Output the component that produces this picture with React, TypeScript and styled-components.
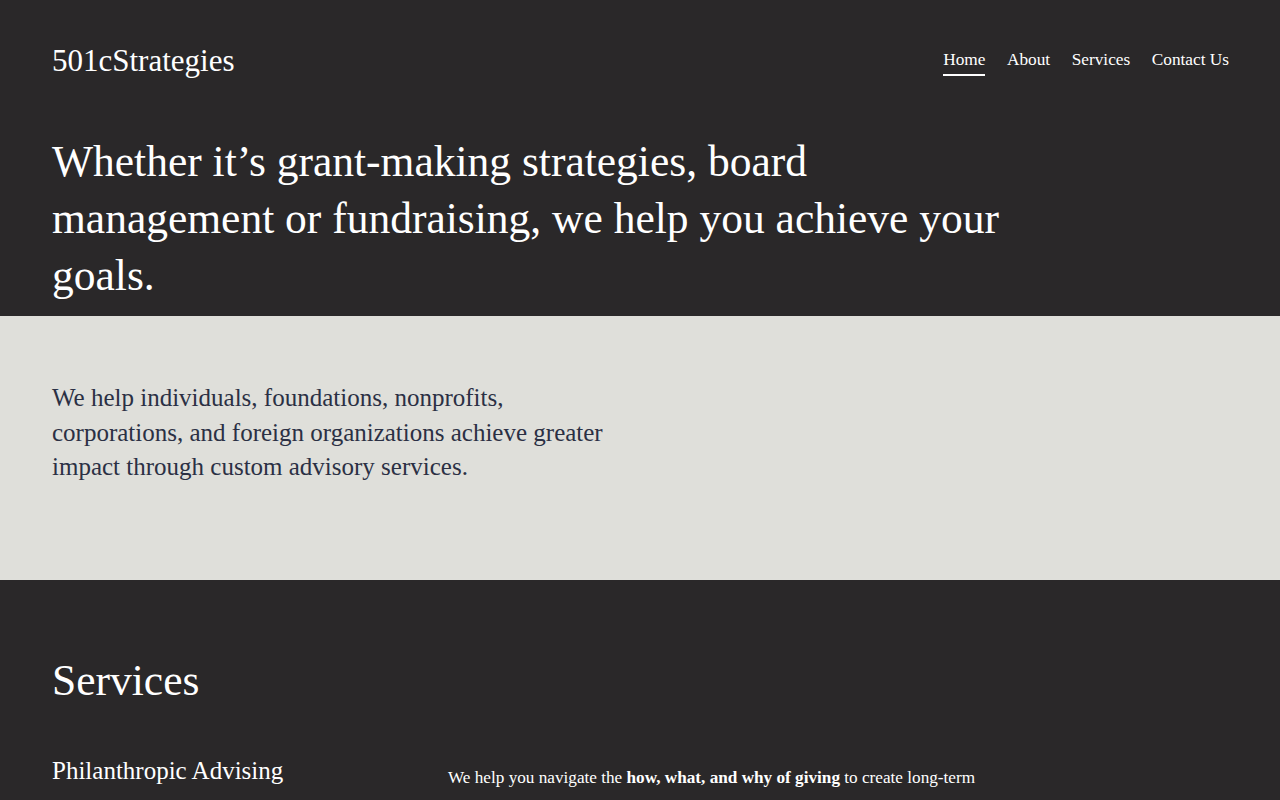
import React from "react";
import styled, { createGlobalStyle } from "styled-components";

const GlobalStyle = createGlobalStyle`
  html, body {
    margin: 0;
    padding: 0;
    background: #2a2829;
    font-family: "Liberation Serif", "Times New Roman", serif;
  }
  * {
    box-sizing: border-box;
  }
`;

const links = ["Home", "About", "Services", "Contact Us"];

const App = () => {
  return (
    <>
      <GlobalStyle />
      <Hero>
        <Header>
          <Logo>501cStrategies</Logo>
          <Nav>
            {links.map((l, i) => (
              <NavLink key={l} href="#" $active={i === 0}>
                {l}
              </NavLink>
            ))}
          </Nav>
        </Header>
        <Headline>
          Whether it’s grant-making strategies, board management or
          fundraising, we help you achieve your goals.
        </Headline>
      </Hero>
      <Intro>
        <IntroText>
          We help individuals, foundations, nonprofits, corporations, and
          foreign organizations achieve greater impact through custom advisory
          services.
        </IntroText>
      </Intro>
      <ServicesSection>
        <SectionTitle>Services</SectionTitle>
        <ServiceRow>
          <ServiceName>Philanthropic Advising</ServiceName>
          <ServiceText>
            We help you navigate the <Strong>how, what, and why of giving</Strong>{" "}
            to create long-term impact for the causes and communities you care
            about most.
          </ServiceText>
        </ServiceRow>
      </ServicesSection>
    </>
  );
};

const Hero = styled.section`
  background: #2a2829;
  color: #ffffff;
  padding: 42px 51px 12px 52px;
`;

const Header = styled.header`
  display: flex;
  justify-content: space-between;
  align-items: center;
  height: 37px;
`;

const Logo = styled.div`
  font-size: 31px;
  line-height: 37px;
  color: #ffffff;
`;

const Nav = styled.nav`
  display: flex;
  gap: 21.5px;
  align-items: center;
`;

const NavLink = styled.a<{ $active?: boolean }>`
  color: #ffffff;
  text-decoration: none;
  font-size: 17.3px;
  line-height: 20px;
  padding: 5px 0 4px;
  border-bottom: 2px solid ${(p) => (p.$active ? "#ffffff" : "transparent")};
`;

const Headline = styled.h1`
  margin: 54px 0 0;
  max-width: 970px;
  font-weight: normal;
  font-size: 43.5px;
  line-height: 57px;
`;

const Intro = styled.section`
  background: #dfdfda;
  padding: 65px 52px 95px;
`;

const IntroText = styled.p`
  margin: 0;
  width: 50%;
  color: #2b3044;
  font-size: 25px;
  line-height: 34.5px;
`;

const ServicesSection = styled.section`
  background: #2a2829;
  color: #ffffff;
  padding: 72px 52px 80px;
`;

const SectionTitle = styled.h2`
  margin: 0;
  font-weight: normal;
  font-size: 43.5px;
  line-height: 57px;
`;

const ServiceRow = styled.div`
  display: grid;
  grid-template-columns: 396px 1fr;
  margin-top: 45px;
`;

const ServiceName = styled.h3`
  margin: 0;
  font-weight: normal;
  font-size: 25px;
  line-height: 34.5px;
`;

const ServiceText = styled.p`
  margin: 7px 0 0;
  max-width: 555px;
  font-size: 17.2px;
  line-height: 34px;
`;

const Strong = styled.strong`
  font-weight: bold;
`;

export default App;
